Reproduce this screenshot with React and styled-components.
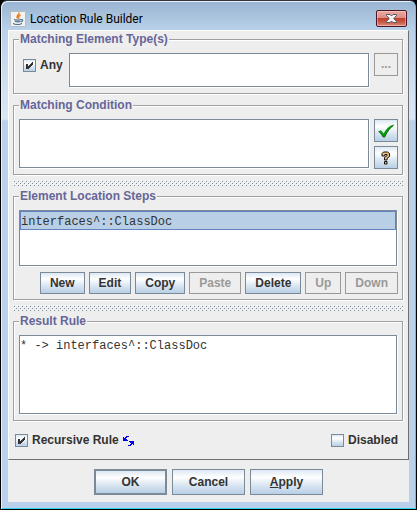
import React, { useState } from "react";
import styled, { createGlobalStyle, css } from "styled-components";

const GlobalStyle = createGlobalStyle`
  * { box-sizing: border-box; }
  body { margin: 0; background: #000; }
`;

const ocean = "linear-gradient(#dde8f3 0%, #ffffff 30%, #dde8f3 60%, #b8cfe5 100%)";

const WindowFrame = styled.main`
  min-height: 100vh;
  display: flex;
  flex-direction: column;
  padding: 0 7px 7px;
  border: 1px solid;
  border-color: #33313a #000 #000 #000;
  border-radius: 7px 7px 0 0;
  background: linear-gradient(#99b4d1 0, #b9d1ea 29px, #d3e3f4 95px, #d9e7f5 118px, #b9d1ea 120px);
  box-shadow: inset 1px 1px 0 #e4f1fb, inset -1px -1px 0 #35d3f0;
  font: bold 12px/15px "Liberation Sans", Arial, sans-serif;
  color: #333;
`;

const TitleBar = styled.header`
  display: flex;
  align-items: center;
  gap: 4px;
  height: 29px;
  padding: 6px 2px 0 2px;
`;

const Title = styled.h1`
  flex: 1;
  margin: 0;
  font: 12px/16px Roboto, "Noto Sans", sans-serif;
  color: #000;
`;

const CloseButton = styled.button`
  display: flex;
  align-items: center;
  justify-content: center;
  width: 31px;
  height: 17px;
  padding: 0;
  border: 1px solid #4c1626;
  border-radius: 2px;
  background: linear-gradient(#e9aaa0 0, #dc8e82 47%, #bb402b 48%, #c85a45 75%, #dc8f80 100%);
  box-shadow: inset 0 0 0 1px rgba(255, 220, 210, 0.45);
`;

const Body = styled.form`
  flex: 1;
  display: flex;
  flex-direction: column;
  background: #eee;
`;

const Editor = styled.div`
  flex: 1;
  display: flex;
  flex-direction: column;
  padding: 1px 5px 11px 4px;
  border: 1px solid;
  border-color: #fff #6e6e73 #6e6e73 #fff;
`;

const Group = styled.fieldset`
  display: flex;
  flex-direction: column;
  min-width: 0;
  flex: ${(p) => (p.$grow ? "1 0 auto" : "none")};
  margin: 0 0 ${(p) => (p.$spaced ? 4 : 0)}px;
  padding: 6px 4px 5px 5px;
  border: 1px solid #a0a0a0;
  box-shadow: 1px 1px 0 #fff, inset 1px 1px 0 #fff;
`;

const Legend = styled.legend`
  height: 15px;
  padding: 0 1px;
  background: #eee;
  color: #666699;
`;

const FieldRow = styled.div`
  display: flex;
  align-items: stretch;
  gap: 4px;
`;

const sunken = css`
  border: 1px solid #7a8a99;
  background: #fff;
  box-shadow: 1px 1px 0 #fff;
  font: 12px/14px "Liberation Mono", "Courier New", monospace;
  color: #333;
`;

const TextBox = styled.textarea`
  ${sunken}
  display: block;
  flex: 1;
  min-width: 0;
  height: ${(p) => p.$height}px;
  margin: 0 1px 1px 0;
  padding: 3px 0;
  resize: none;
  outline: none;
`;

const ResultBox = styled(TextBox)`
  flex: 1 0 auto;
`;

const StepList = styled.ul`
  ${sunken}
  height: 56px;
  margin: 0 1px 1px 0;
  padding: 0;
  list-style: none;
`;

const Step = styled.li`
  height: 19px;
  padding: 3px 0 0;
  border: 1px solid #6382bf;
  background: #b8cfe5;
`;

const SideButtons = styled.div`
  display: flex;
  flex-direction: column;
  gap: 4px;
`;

const Button = styled.button`
  height: 22px;
  padding: 0 9px;
  border: 1px solid #7a8a99;
  border-radius: 0;
  background: ${ocean};
  font: inherit;
  color: #333;
  white-space: nowrap;
  &:disabled {
    border-color: #999;
    background: #eee;
    color: #999;
  }
`;

const SquareButton = styled(Button)`
  display: flex;
  align-items: center;
  justify-content: center;
  width: 24px;
  height: 23px;
  padding: 0;
`;

const ActionButton = styled(Button)`
  width: 73px;
  height: 26px;
  border-width: ${(p) => (p.$primary ? 2 : 1)}px;
`;

const StepActions = styled.div`
  display: flex;
  justify-content: flex-end;
  gap: 4px;
  padding-top: 5px;
`;

const Grip = styled.div`
  height: 6px;
  margin: 5px 0 3px;
  background-image:
    conic-gradient(from 270deg at 1px 1px, #fff 90deg, transparent 0),
    conic-gradient(from 270deg at 1px 1px, #fff 90deg, transparent 0),
    conic-gradient(from 270deg at 1px 1px, #7a8a99 90deg, transparent 0),
    conic-gradient(from 270deg at 1px 1px, #7a8a99 90deg, transparent 0);
  background-size: 4px 4px;
  background-position: 0 0, 2px 2px, 1px 1px, 3px 3px;
`;

const CheckLabel = styled.label`
  display: flex;
  align-items: center;
  gap: 4px;
  height: 15px;
`;

const AnyLabel = styled(CheckLabel)`
  padding: 0 2px 0 4px;
  margin-top: 5px;
`;

const CheckBoxWrap = styled.span`
  display: grid;
  width: 13px;
  height: 13px;
  > * { grid-area: 1 / 1; }
  > svg { pointer-events: none; }
`;

const CheckInput = styled.input`
  appearance: none;
  width: 13px;
  height: 13px;
  margin: 0;
  border: 1px solid #7a8a99;
  background: ${ocean};
`;

const OptionRow = styled.div`
  display: flex;
  justify-content: space-between;
  padding: 12px 5px 0 2px;
`;

const ButtonBar = styled.footer`
  display: flex;
  justify-content: center;
  gap: 5px;
  padding: 9px 0 7px;
`;

function CheckBox({ label, initial = false, icon, wrapper: Wrapper = CheckLabel }) {
  const [on, setOn] = useState(initial);
  return (
    <Wrapper>
      <CheckBoxWrap>
        <CheckInput type="checkbox" checked={on} onChange={(e) => setOn(e.target.checked)} />
        {on && (
          <svg width="13" height="13" viewBox="0 0 13 13" shapeRendering="crispEdges" aria-hidden="true">
            <path d="M3 5h2v5H3zM5 7h1v3H5zM6 6h1v3H6zM7 5h1v3H7zM8 4h1v3H8zM9 3h1v3H9z" fill="#333" />
          </svg>
        )}
      </CheckBoxWrap>
      {label}
      {icon}
    </Wrapper>
  );
}

const JavaIcon = () => (
  <svg width="16" height="16" viewBox="0 0 16 16" aria-hidden="true">
    <rect x=".5" y=".5" width="15" height="15" rx="1" fill="#f1f2f2" stroke="#b9bcbf" />
    <path d="M8.8 1.5c1.6 2-3.5 3-1.2 6M10.6 4c-2 1-2.8 2-1.4 3.7" fill="none" stroke="#e8812b" strokeWidth="1.5" />
    <path d="M4 8.4c2 .8 5 .8 7 0M4.8 10.3c2 .7 4 .7 5.6 0M3 12.6c2.5 1.3 7 1.2 9-.2M11 8.6c2.4-.5 2.2 1.8-.2 2.3" fill="none" stroke="#47698f" strokeWidth="1.1" />
  </svg>
);

const CloseIcon = () => (
  <svg width="13" height="11" viewBox="0 0 13 11" aria-hidden="true">
    <path d="M1.5 1.5h3.500l1.500 1.500 1.500-1.500h3.500v1L8.800 5.500l2.700 3v1H8L6.500 8 5 9.500H1.500v-1l2.700-3-2.700-3z" fill="#f4f4f6" stroke="#535666" />
  </svg>
);

const TickIcon = () => (
  <svg width="16" height="14" viewBox="0 0 16 14" aria-hidden="true">
    <path d="M.5 7.2 3 6.3l2.6 3.2C8 4.8 11 1.7 15.5.4v1C11.8 3.8 9 7.7 6.6 13H5C4 10.6 2.5 8.5.5 7.2z" fill="#00a000" />
    <path d="m.5 7.5 2.4 2 2.4 3.6h1.400C9 8 11.8 4 15.5 1.400" fill="none" stroke="#064b06" strokeWidth=".8" />
  </svg>
);

const HelpIcon = () => (
  <svg width="10" height="14" viewBox="0 0 10 14" aria-hidden="true">
    <path d="M1 5V2.5L2.5 1h4L8.500 2.500v3L6 7.500V9H3.500V6.500L6 4.700V3.500H3.800V5z" fill="#f0c078" stroke="#111" />
    <path d="M3.5 10.5h2.500V13H3.500z" fill="#f0c078" stroke="#111" />
  </svg>
);

const RecursiveIcon = () => (
  <svg width="11" height="10" viewBox="0 0 11 10" shapeRendering="crispEdges" aria-hidden="true">
    <path
      d="M3 0h3v1H3zM0 1h1v1H0zM2 1h2v1H2zM0 2h3v1H0zM0 3h4v1H0zM0 4h5v1H0zM6 5h5v1H6zM7 6h4v1H7zM8 7h3v1H8zM7 8h2v1H7zM10 8h1v1h-1zM5 9h3v1H5z"
      fill="#0000f0"
    />
  </svg>
);

export default function App() {
  return (
    <>
      <GlobalStyle />
      <WindowFrame>
        <TitleBar>
          <JavaIcon />
          <Title>Location Rule Builder</Title>
          <CloseButton type="button" aria-label="Close"><CloseIcon /></CloseButton>
        </TitleBar>
        <Body onSubmit={(e) => e.preventDefault()}>
          <Editor>
            <Group $spaced>
              <Legend>Matching Element Type(s)</Legend>
              <FieldRow>
                <CheckBox wrapper={AnyLabel} label="Any" initial />
                <TextBox $height={34} aria-label="Matching element types" />
                <SquareButton type="button" disabled>...</SquareButton>
              </FieldRow>
            </Group>
            <Group>
              <Legend>Matching Condition</Legend>
              <FieldRow>
                <TextBox $height={49} aria-label="Matching condition" />
                <SideButtons>
                  <SquareButton type="button" aria-label="Check condition"><TickIcon /></SquareButton>
                  <SquareButton type="button" aria-label="Help"><HelpIcon /></SquareButton>
                </SideButtons>
              </FieldRow>
            </Group>
            <Grip />
            <Group>
              <Legend>Element Location Steps</Legend>
              <StepList role="listbox" aria-label="Element location steps">
                <Step role="option" aria-selected="true">interfaces^::ClassDoc</Step>
              </StepList>
              <StepActions>
                <Button type="button">New</Button>
                <Button type="button">Edit</Button>
                <Button type="button">Copy</Button>
                <Button type="button" disabled>Paste</Button>
                <Button type="button">Delete</Button>
                <Button type="button" disabled>Up</Button>
                <Button type="button" disabled>Down</Button>
              </StepActions>
            </Group>
            <Grip />
            <Group $grow>
              <Legend>Result Rule</Legend>
              <ResultBox $height={79} readOnly aria-label="Result rule" value="* -> interfaces^::ClassDoc" />
            </Group>
            <OptionRow>
              <CheckBox label="Recursive Rule" initial icon={<RecursiveIcon />} />
              <CheckBox label="Disabled" />
            </OptionRow>
          </Editor>
          <ButtonBar>
            <ActionButton type="submit" $primary>OK</ActionButton>
            <ActionButton type="button">Cancel</ActionButton>
            <ActionButton type="button"><u>A</u>pply</ActionButton>
          </ButtonBar>
        </Body>
      </WindowFrame>
    </>
  );
}
